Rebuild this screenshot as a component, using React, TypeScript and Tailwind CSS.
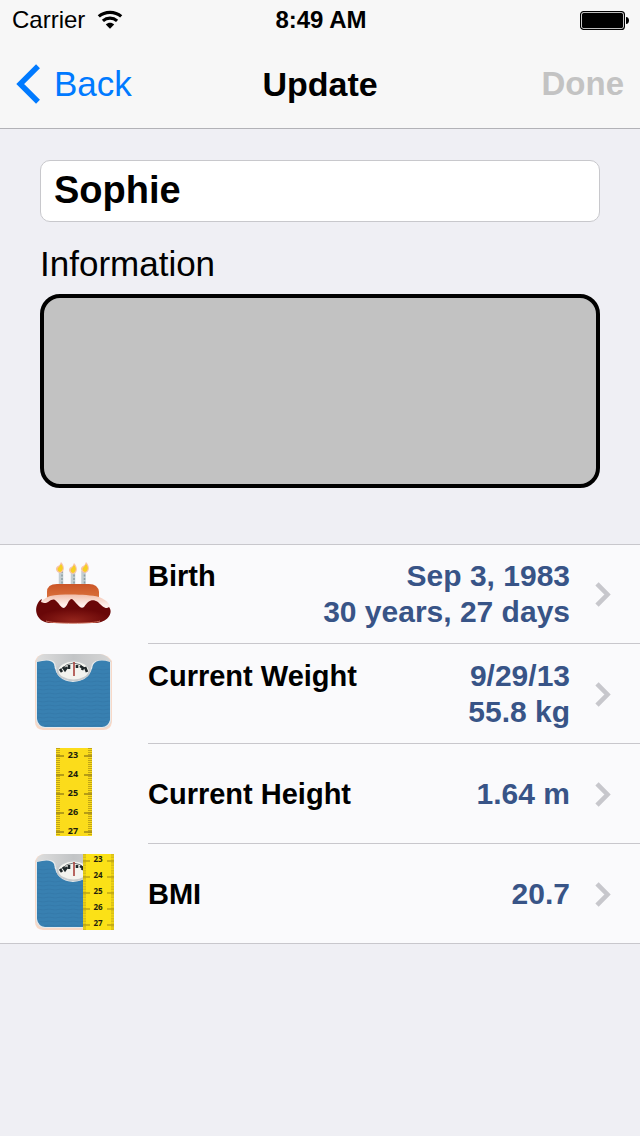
import type { ReactNode } from "react";
import { useState } from "react";

function WifiIcon() {
  return (
    <svg viewBox="0 0 26 20" className="h-5 w-[26px]" aria-hidden="true">
      <g fill="none" stroke="#000" strokeWidth="3.2">
        <path d="M1.8 6.4C8 .9 18 .9 24.2 6.4" />
        <path d="M5.9 10.9C10 7.3 16 7.3 20.1 10.9" />
      </g>
      <path d="M8.8 14.500C11.200 12.300 14.800 12.300 17.200 14.500L13 18.800Z" />
    </svg>
  );
}

function BatteryIcon() {
  return (
    <svg viewBox="0 0 50 20" className="h-5 w-[50px]" aria-hidden="true">
      <rect x="0.600" y="1.600" width="43.800" height="17.800" rx="3" fill="#fff" stroke="#000" strokeWidth="1.200" />
      <rect x="2" y="3" width="41" height="15" rx="1.500" />
      <path d="M46 7C50 7 50 14 46 14Z" />
    </svg>
  );
}

function BackChevron() {
  return (
    <svg viewBox="0 0 24 40" className="h-10 w-6" aria-hidden="true">
      <path d="M22 2.200 4.200 20 22 37.800" fill="none" stroke="#007aff" strokeWidth="5.500" />
    </svg>
  );
}

function RowChevron() {
  return (
    <svg viewBox="0 0 18 26" className="h-[26px] w-[18px] shrink-0" aria-hidden="true">
      <path d="M3 2.800 13.500 13.500 3 24.200" fill="none" stroke="#c7c7cc" strokeWidth="4.600" />
    </svg>
  );
}

function Flame({ x, y }: { x: number; y: number }) {
  return (
    <g transform={`translate(${x} ${y})`}>
      <path d="M1 -5C5 -1 5 5 0 6C-5 5 -5 0 -2 -1C0 -2 0 -3 1 -5Z" fill="#f8c3a8" />
      <path d="M1 -3C4 0 3 4 0 5C-3 4 -3 1 -1 0Z" fill="#f6cf22" />
    </g>
  );
}

function CakeIcon() {
  return (
    <svg viewBox="0 0 80 80" className="size-20" aria-hidden="true">
      <defs>
        <linearGradient id="sponge" x1="0" y1="0" x2="0" y2="1">
          <stop offset="0" stopColor="#cb5527" />
          <stop offset="1" stopColor="#dd7740" />
        </linearGradient>
        <radialGradient id="base" cx="0.5" cy="0.9" r="0.5">
          <stop offset="0" stopColor="#94251c" />
          <stop offset="1" stopColor="#690708" />
        </radialGradient>
        <linearGradient id="icing" x1="0" y1="0" x2="0" y2="1">
          <stop offset="0" stopColor="#f1bfac" />
          <stop offset="0.6" stopColor="#fff0ec" />
        </linearGradient>
      </defs>
      <path d="M27 18V33M39 18V33M49.500 18V33" stroke="#c3cdd1" strokeWidth="4.500" />
      <path d="M28 18V32M40 18V32M50.500 18V32" stroke="#8c9da3" strokeWidth="1.500" strokeDasharray="2 1.500" />
      <Flame x={26} y={14} />
      <Flame x={39} y={15} />
      <Flame x={51} y={14} />
      <path d="M13 48V39Q13 31 23 31H55Q64 31 65 39V48Z" fill="url(#sponge)" />
      <path d="M6 50Q9 46 16 43C28 41 52 41 65 44C73 47 78 52 76 59L3 59Z" fill="url(#icing)" />
      <path d="M3 52C0 60 5 70 17 70H61C73 70 80 60 75 54C72 57 68 53 64 49C58 45 54 48 50 54C46 57 43 50 38 46C34 46 34 53 30 55C27 55 25 50 21 47C17 45 14 51 10 50L7 49L8 46Q5 47 3 52Z" fill="url(#base)" />
      <path d="M12 68C18 71 60 71 66 68" fill="none" stroke="#d07561" strokeWidth="1" />
    </svg>
  );
}

function ScaleDrawing({ id }: { id: string }) {
  return (
    <>
      <defs>
        <linearGradient id={`${id}-metal`} x1="0" y1="0" x2="1" y2="0">
          <stop offset="0" stopColor="#dedede" />
          <stop offset="0.5" stopColor="#c2c4c6" />
          <stop offset="1" stopColor="#d6d6d6" />
        </linearGradient>
        <pattern id={`${id}-ribs`} width="12" height="4" patternUnits="userSpaceOnUse">
          <path d="M0 1.500Q3 .5 6 1.500T12 1.500" fill="none" stroke="#2c6e9d" strokeWidth="0.900" opacity="0.4" />
        </pattern>
      </defs>
      <path d="M10 2H66Q74 3 78 9V70Q77 78 69 78H9Q1 77 1 70V9Q3 3 10 2Z" fill="#f8d9c8" />
      <path d="M10 2H66Q73 3 77 9V70Q75 76 69 76H10Q3 75 2 69V9Q4 3 10 2Z" fill={`url(#${id}-metal)`} />
      <path d="M2 10Q17 5 21 11Q24 28 39 29Q55 28 58 12Q63 5 77 10V69Q75 76 68 76H10Q4 75 2 68Z" fill="#e7eaec" />
      <path d="M3 10Q17 6 20 12Q22 29 39 30Q56 29 59 13Q63 6 76 10V68Q74 75 68 75H11Q4 74 3 67Z" fill="#3880b1" />
      <path d="M3 14H21Q24 29 39 30Q55 29 58 14H76V68L68 75H11L3 67Z" fill={`url(#${id}-ribs)`} />
      <ellipse cx="39.500" cy="18.500" rx="17" ry="10.500" fill="#c8cbcd" />
      <ellipse cx="39.500" cy="18.500" rx="15" ry="9" fill="#f3f3ef" />
      <path d="M26 18Q39.500 4 53 18" fill="none" stroke="#73797b" strokeWidth="1" />
      <g fill="none" stroke="#20282b" strokeWidth="2.600">
        <path d="M26 17 28 20M29 15 31 18 33 15M35 13V17M43 13V16M46 14 49 16 48 18M51 15 53 20" />
      </g>
      <path d="M40 10V24" stroke="#a8403c" strokeWidth="1.600" />
    </>
  );
}

function ScaleIcon() {
  return (
    <svg viewBox="0 0 80 80" className="size-20" aria-hidden="true">
      <ScaleDrawing id="weight" />
    </svg>
  );
}

const marks = [23, 24, 25, 26, 27];

function HeightIcon() {
  return (
    <svg viewBox="0 0 36 88" className="h-[88px] w-9" aria-hidden="true">
      <rect width="36" height="88" fill="#fbdc1b" />
      <path d="M2 0V88M34 0V88" stroke="#b79b18" strokeWidth="4" strokeDasharray="1 1" opacity="0.85" />
      {marks.map((mark, i) => (
        <g key={mark}>
          <path d={`M0 ${8 + i * 19}H8M28 ${8 + i * 19}H36`} stroke="#a08817" strokeWidth="1.500" />
          <text x="17" y={10 + i * 19} textAnchor="middle" fontSize="9" fontWeight="700" fontFamily="Open Sans, sans-serif" fill="#211d0c">
            {mark}
          </text>
        </g>
      ))}
    </svg>
  );
}

function BmiIcon() {
  return (
    <svg viewBox="0 0 80 80" className="size-20" aria-hidden="true">
      <ScaleDrawing id="bmi" />
      <rect x="49" y="2" width="31" height="76" fill="#fbe117" />
      <path d="M50.500 2V78M78.500 2V78" stroke="#c0a518" strokeWidth="3" strokeDasharray="0.8 0.8" opacity="0.75" />
      {marks.map((mark, i) => (
        <g key={mark}>
          <path d={`M49 ${9 + i * 16}H56M73 ${9 + i * 16}H80`} stroke="#a08817" strokeWidth="1.200" />
          <text x="64" y={10 + i * 16} textAnchor="middle" fontSize="8" fontWeight="700" fontFamily="Open Sans, sans-serif" fill="#211d0c">
            {mark}
          </text>
        </g>
      ))}
    </svg>
  );
}

const rows: { label: string; values: string[]; icon: ReactNode }[] = [
  { label: "Birth", values: ["Sep 3, 1983", "30 years, 27 days"], icon: <CakeIcon /> },
  { label: "Current Weight", values: ["9/29/13", "55.8 kg"], icon: <ScaleIcon /> },
  { label: "Current Height", values: ["1.64 m"], icon: <HeightIcon /> },
  { label: "BMI", values: ["20.7"], icon: <BmiIcon /> },
];

export default function App() {
  const [name, setName] = useState("Sophie");
  const [information, setInformation] = useState("");

  return (
    <div className="min-h-screen bg-[#efeff4] font-['Liberation_Sans',sans-serif] text-black">
      <header className="border-b border-[#b2b2b7] bg-[#f7f7f7]">
        <div className="grid h-10 grid-cols-3 items-center pr-2.5 pl-3 text-2xl">
          <div className="flex items-center gap-3">
            <span>Carrier</span>
            <WifiIcon />
          </div>
          <time className="text-center font-bold">8:49 AM</time>
          <div className="flex justify-end">
            <BatteryIcon />
          </div>
        </div>
        <nav className="grid h-22 grid-cols-3 items-center px-4">
          <a href="#back" className="flex items-center gap-3.5 text-[35px] leading-10 text-[#007aff]">
            <BackChevron />
            Back
          </a>
          <h1 className="text-center text-[34px] leading-10 font-bold">Update</h1>
          <button type="button" disabled className="justify-self-end text-[33px] leading-10 font-bold text-[#c3c3c3]">
            Done
          </button>
        </nav>
      </header>

      <main>
        <form className="flex flex-col px-10 pt-[31px] pb-14">
          <input
            aria-label="Name"
            value={name}
            onChange={(e) => setName(e.target.value)}
            className="h-[62px] w-full rounded-[10px] border border-[#c8c8cc] bg-white px-[13px] pb-0.5 text-[38px] font-bold outline-none"
          />
          <label htmlFor="information" className="mt-[22px] mb-2.5 text-[35px] leading-10">
            Information
          </label>
          <textarea
            id="information"
            value={information}
            onChange={(e) => setInformation(e.target.value)}
            className="h-[194px] w-full resize-none rounded-[20px] border-4 border-black bg-[#c2c2c2] p-3 text-3xl outline-none"
          />
        </form>

        <ul className="border-b border-[#c8c7cc] bg-[#fafafc]">
          {rows.map((row) => (
            <li key={row.label} className="group h-[100px] first:border-t first:border-[#c8c7cc] last:h-[99px]">
              <button type="button" className="flex h-full w-full items-stretch">
                <span className="flex w-37 shrink-0 items-center justify-center pb-1">{row.icon}</span>
                <span className="flex grow items-center gap-6 border-b border-[#c8c7cc] pr-7 group-last:border-b-0">
                  <span className="flex grow items-start justify-between leading-9 font-bold">
                    <span className="text-[29px]">{row.label}</span>
                    <span className="flex flex-col text-right text-[30px] text-[#385487]">
                      {row.values.map((value) => (
                        <span key={value}>{value}</span>
                      ))}
                    </span>
                  </span>
                  <RowChevron />
                </span>
              </button>
            </li>
          ))}
        </ul>
      </main>
    </div>
  );
}
